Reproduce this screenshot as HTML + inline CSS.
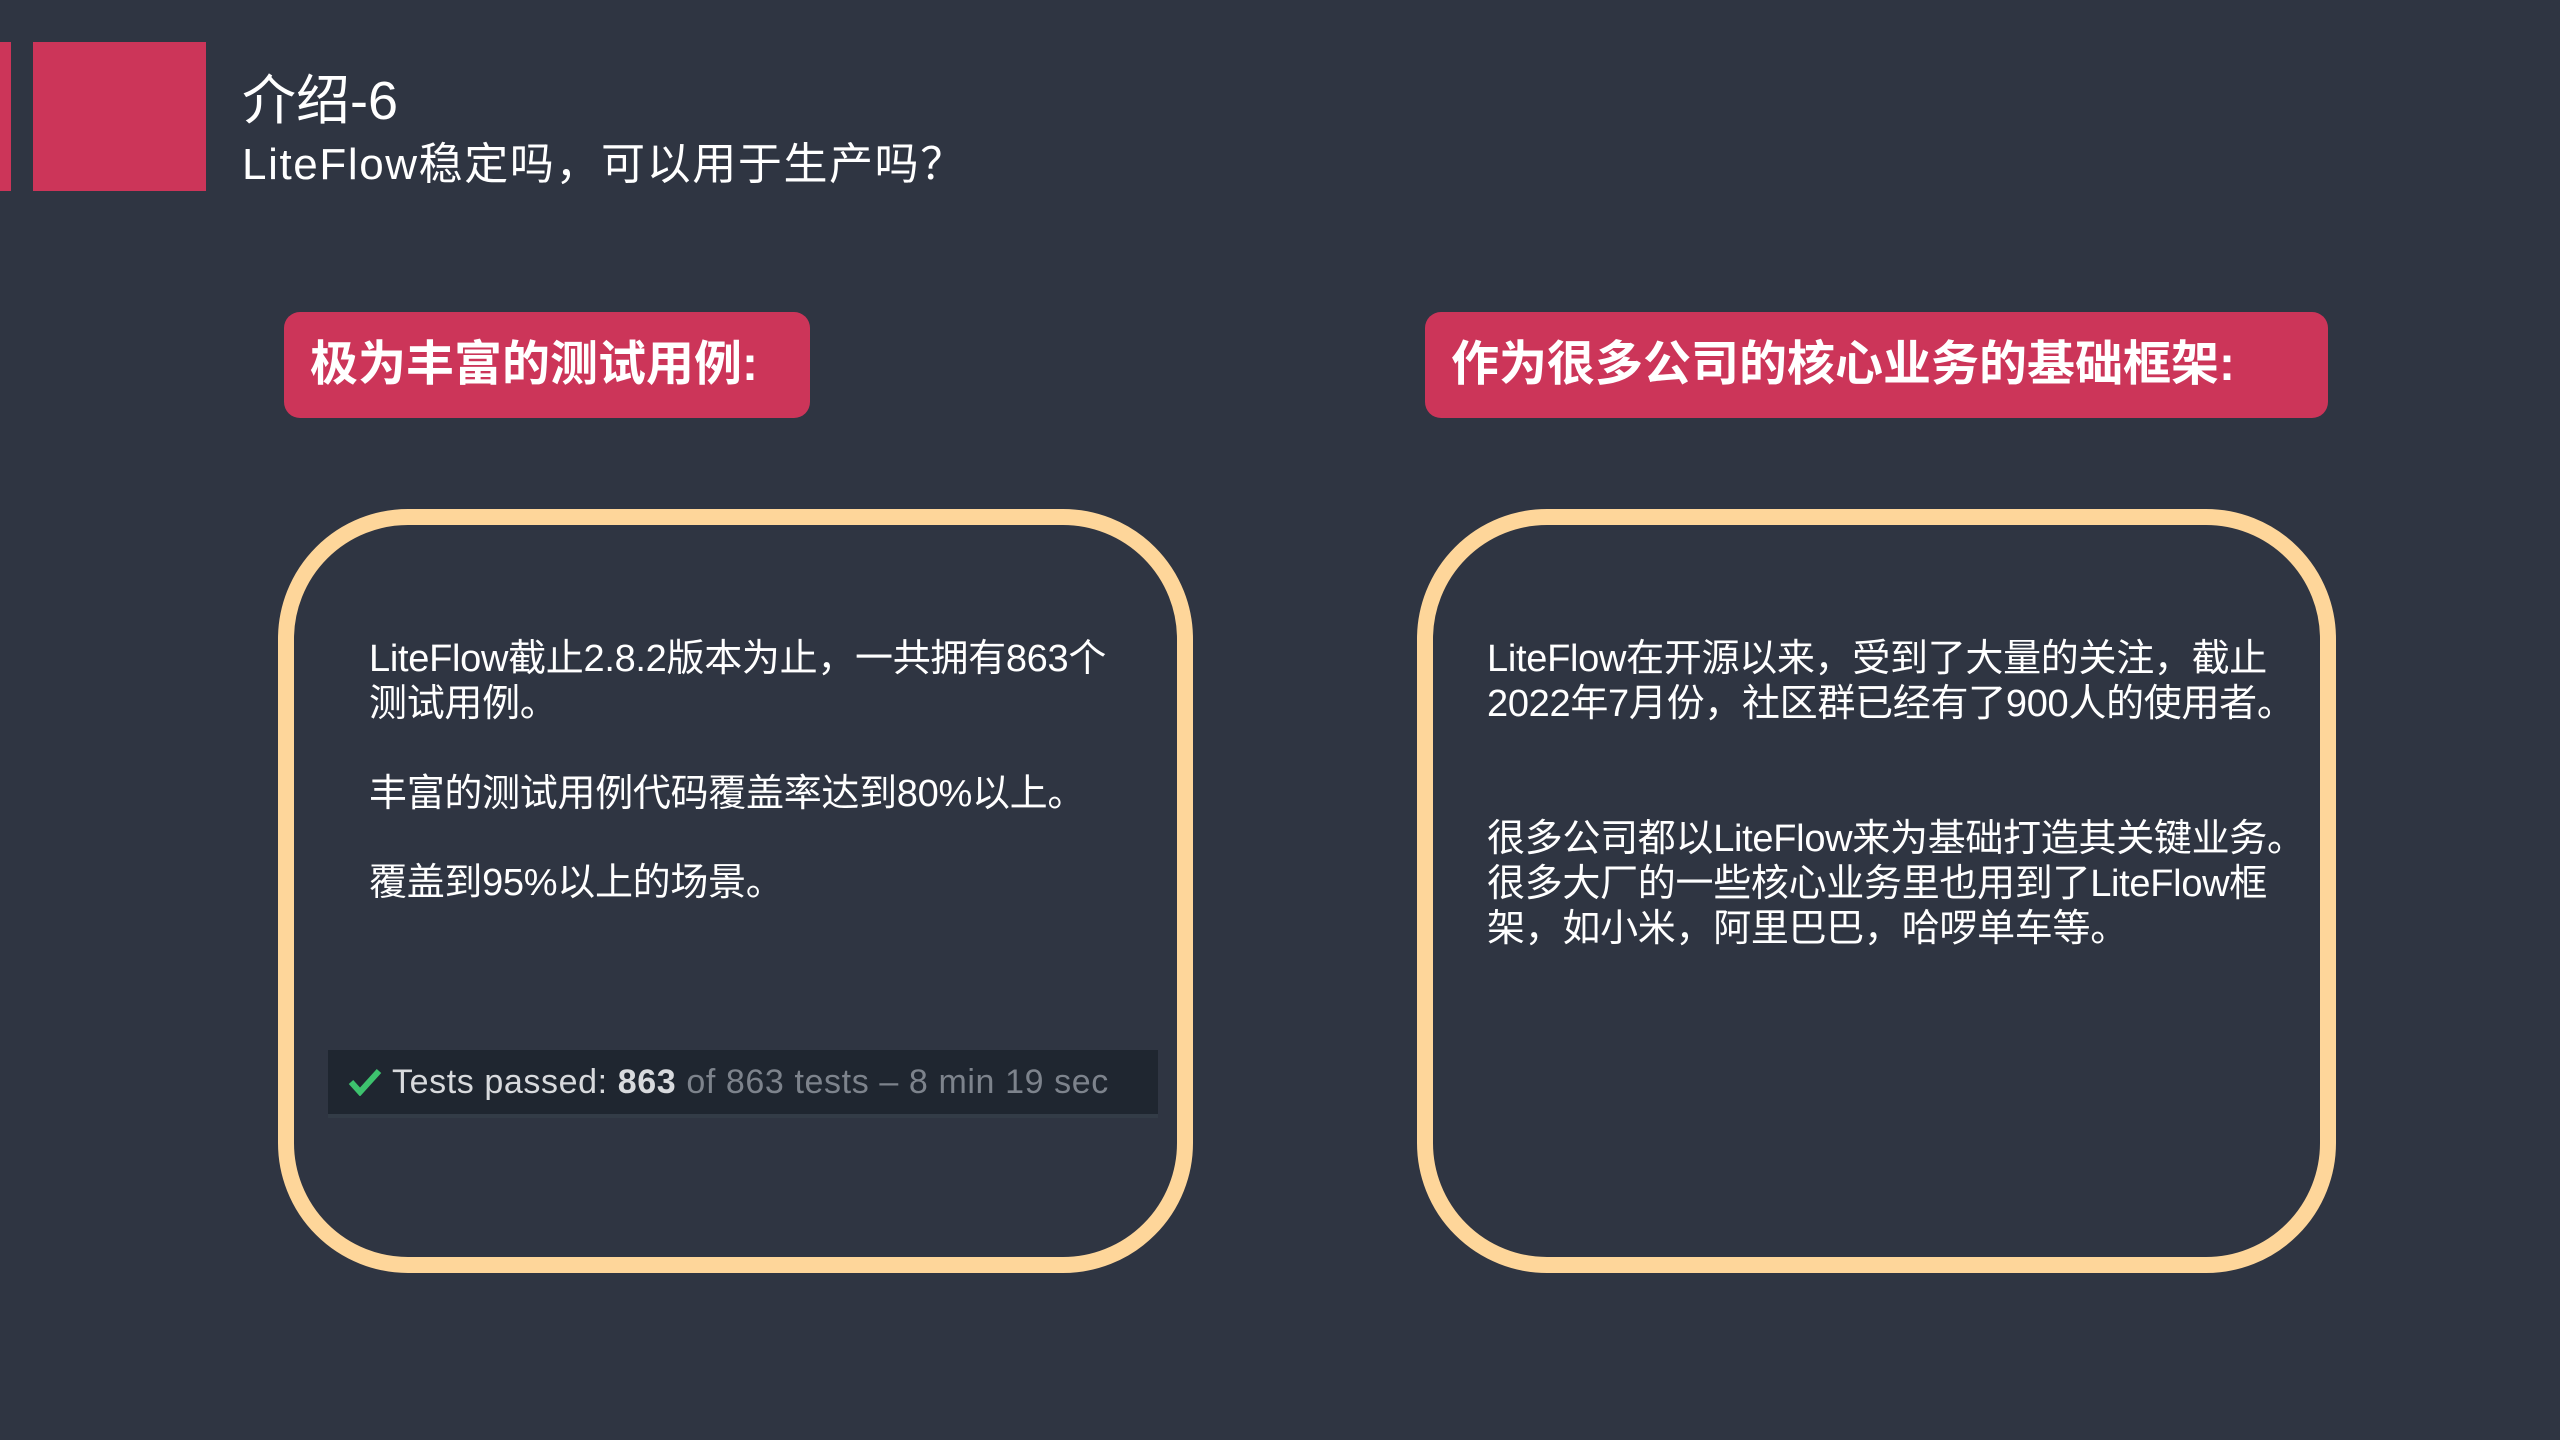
<!DOCTYPE html>
<html><head><meta charset="utf-8"><style>
*{margin:0;padding:0;box-sizing:border-box}
body{width:2560px;height:1440px;background:#2f3542;position:relative;overflow:hidden;font-family:"Liberation Sans","Noto Sans CJK SC",sans-serif;color:#fff}
.a{position:absolute}
.red{background:#cc3559}
.pill{border-radius:16px;font-weight:bold;font-size:48px;line-height:106px;padding-left:26px;white-space:nowrap}
.box{border:16px solid #fed69a;border-radius:130px}
.t{font-size:38px;line-height:45px;white-space:nowrap;letter-spacing:-0.3px}
</style></head><body>
<div class="a red" style="left:0;top:42px;width:11px;height:149px"></div>
<div class="a red" style="left:33px;top:42px;width:173px;height:149px"></div>
<div class="a" style="left:242px;top:70px;font-size:54px;line-height:62px">介绍-6</div>
<div class="a" style="left:242px;top:139px;font-size:44px;line-height:52px;letter-spacing:1.6px">LiteFlow稳定吗，可以用于生产吗？</div>
<div class="a red pill" style="left:284px;top:312px;width:526px;height:106px">极为丰富的测试用例:</div>
<div class="a red pill" style="left:1425px;top:312px;width:903px;height:106px">作为很多公司的核心业务的基础框架:</div>
<div class="a box" style="left:278px;top:509px;width:915px;height:764px"></div>
<div class="a box" style="left:1417px;top:509px;width:919px;height:764px"></div>
<div class="a t" style="left:369px;top:637px">LiteFlow截止2.8.2版本为止，一共拥有863个<br>测试用例。</div>
<div class="a t" style="left:369px;top:772px">丰富的测试用例代码覆盖率达到80%以上。</div>
<div class="a t" style="left:369px;top:861px">覆盖到95%以上的场景。</div>
<div class="a t" style="left:1487px;top:637px">LiteFlow在开源以来，受到了大量的关注，截止<br>2022年7月份，社区群已经有了900人的使用者。</div>
<div class="a t" style="left:1487px;top:817px">很多公司都以LiteFlow来为基础打造其关键业务。<br>很多大厂的一些核心业务里也用到了LiteFlow框<br>架，如小米，阿里巴巴，哈啰单车等。</div>
<div class="a" style="left:328px;top:1050px;width:830px;height:68px;background:#1f2630;border-bottom:4px solid #333c47"></div>
<svg class="a" style="left:348px;top:1068px" width="34" height="28" viewBox="0 0 34 28"><path d="M3 14 L12 24 L31 3" stroke="#3dc26e" stroke-width="6" fill="none"/></svg>
<div class="a" style="left:392px;top:1061px;font-size:34px;line-height:42px;white-space:nowrap;color:#d8dadd;letter-spacing:0.6px">Tests passed: <b>863</b> <span style="color:#7d838c">of 863 tests – 8 min 19 sec</span></div>
</body></html>
